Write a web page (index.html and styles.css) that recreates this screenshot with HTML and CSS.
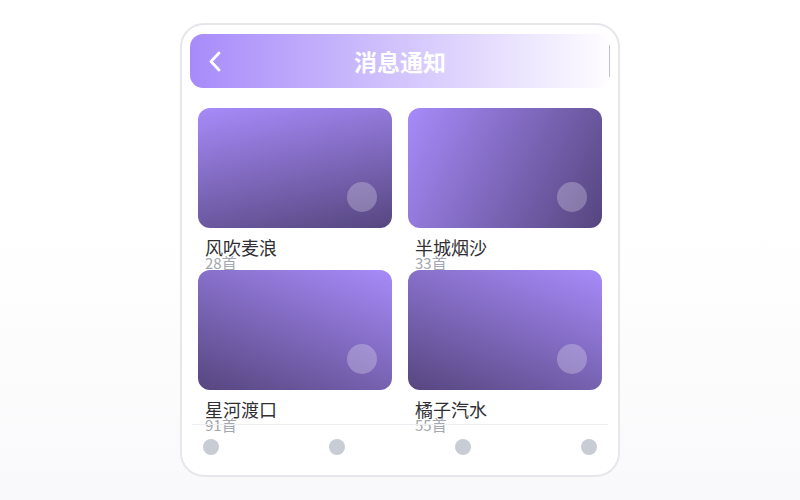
FILE: index.html
```html
<!DOCTYPE html>
<html lang="zh-CN">
  <head>
    <meta charset="UTF-8" />
    <meta name="viewport" content="width=device-width, initial-scale=1.0" />
    <title>消息通知</title>
    <link rel="stylesheet" href="styles.css">
  </head>
  <body>
    <div class="phone">
      <div class="top-bar">
        <div class="back">
          <svg width="12" height="21" viewBox="0 0 12 21">
            <polyline points="10,2 2,10.5 10,19" fill="none" stroke="#fff" stroke-width="2.8" stroke-linecap="round" stroke-linejoin="round" />
          </svg>
        </div>
        <div class="title">消息通知</div>
        <div class="edge"></div>
      </div>
      <div class="list">
        <div class="item">
          <div class="cover cover-a"><span class="dot"></span></div>
          <div class="name">风吹麦浪</div>
          <div class="count">28首</div>
        </div>
        <div class="item">
          <div class="cover cover-b"><span class="dot"></span></div>
          <div class="name">半城烟沙</div>
          <div class="count">33首</div>
        </div>
        <div class="item">
          <div class="cover cover-c"><span class="dot"></span></div>
          <div class="name">星河渡口</div>
          <div class="count">91首</div>
        </div>
        <div class="item">
          <div class="cover cover-c"><span class="dot"></span></div>
          <div class="name">橘子汽水</div>
          <div class="count">55首</div>
        </div>
      </div>
      <ul class="tabs">
        <li></li>
        <li></li>
        <li></li>
        <li></li>
      </ul>
    </div>
  </body>
</html>
```

FILE: styles.css
```css
* {
  padding: 0;
  margin: 0;
  box-sizing: border-box;
}
body {
  width: 800px;
  height: 500px;
  display: flex;
  align-items: center;
  justify-content: center;
  background: linear-gradient(#ffffff 45%, #f9f9fb);
  font-family: "Noto Sans CJK SC", "Noto Sans", sans-serif;
}
.phone {
  width: 440px;
  height: 454px;
  border: 2px solid #e6e6eb;
  border-radius: 24px;
  background-color: #fff;
  display: flex;
  flex-direction: column;
}
.top-bar {
  margin: 9px 8px 0;
  height: 54px;
  border-radius: 13px;
  background: linear-gradient(to right, #a78bfa, #fefdff);
  display: grid;
  grid-template-columns: 1fr auto 1fr;
  align-items: center;
}
.back {
  display: flex;
  align-items: center;
  padding-left: 19px;
}
.title {
  color: #fff;
  font-size: 23px;
  font-weight: 700;
}
.edge {
  justify-self: end;
  width: 1px;
  height: 32px;
  background-color: #c9b9fc;
}
.list {
  flex: 1;
  min-height: 0;
  padding: 20px 16px 0;
  display: grid;
  grid-template-columns: 1fr 1fr;
  grid-auto-rows: 150px;
  column-gap: 16px;
  row-gap: 12px;
}
.item {
  min-width: 0;
}
.cover {
  position: relative;
  height: 120px;
  border-radius: 12px;
}
.cover-a {
  background: linear-gradient(168deg, #a78bfa, #56467f);
}
.cover-b {
  background: linear-gradient(118deg, #a78bfa, #55457e);
}
.cover-c {
  background: linear-gradient(202deg, #a78bfa, #56467f);
}
.dot {
  position: absolute;
  right: 15px;
  bottom: 16px;
  width: 30px;
  height: 30px;
  border-radius: 50%;
  background-color: rgba(255, 255, 255, 0.25);
}
.name {
  margin-top: 8px;
  padding-left: 7px;
  font-size: 18px;
  line-height: 22px;
  color: #2f2f33;
}
.count {
  margin-top: -3px;
  padding-left: 7px;
  font-size: 15px;
  line-height: 16px;
  color: #a3a7ae;
}
.tabs {
  list-style-type: none;
  margin: 0 10px;
  height: 51px;
  border-top: 1px solid #eceef2;
  padding: 14px 11px 0;
  display: flex;
  justify-content: space-between;
  align-items: flex-start;
}
.tabs li {
  width: 16px;
  height: 16px;
  border-radius: 50%;
  background-color: #c8ccd4;
}
```
